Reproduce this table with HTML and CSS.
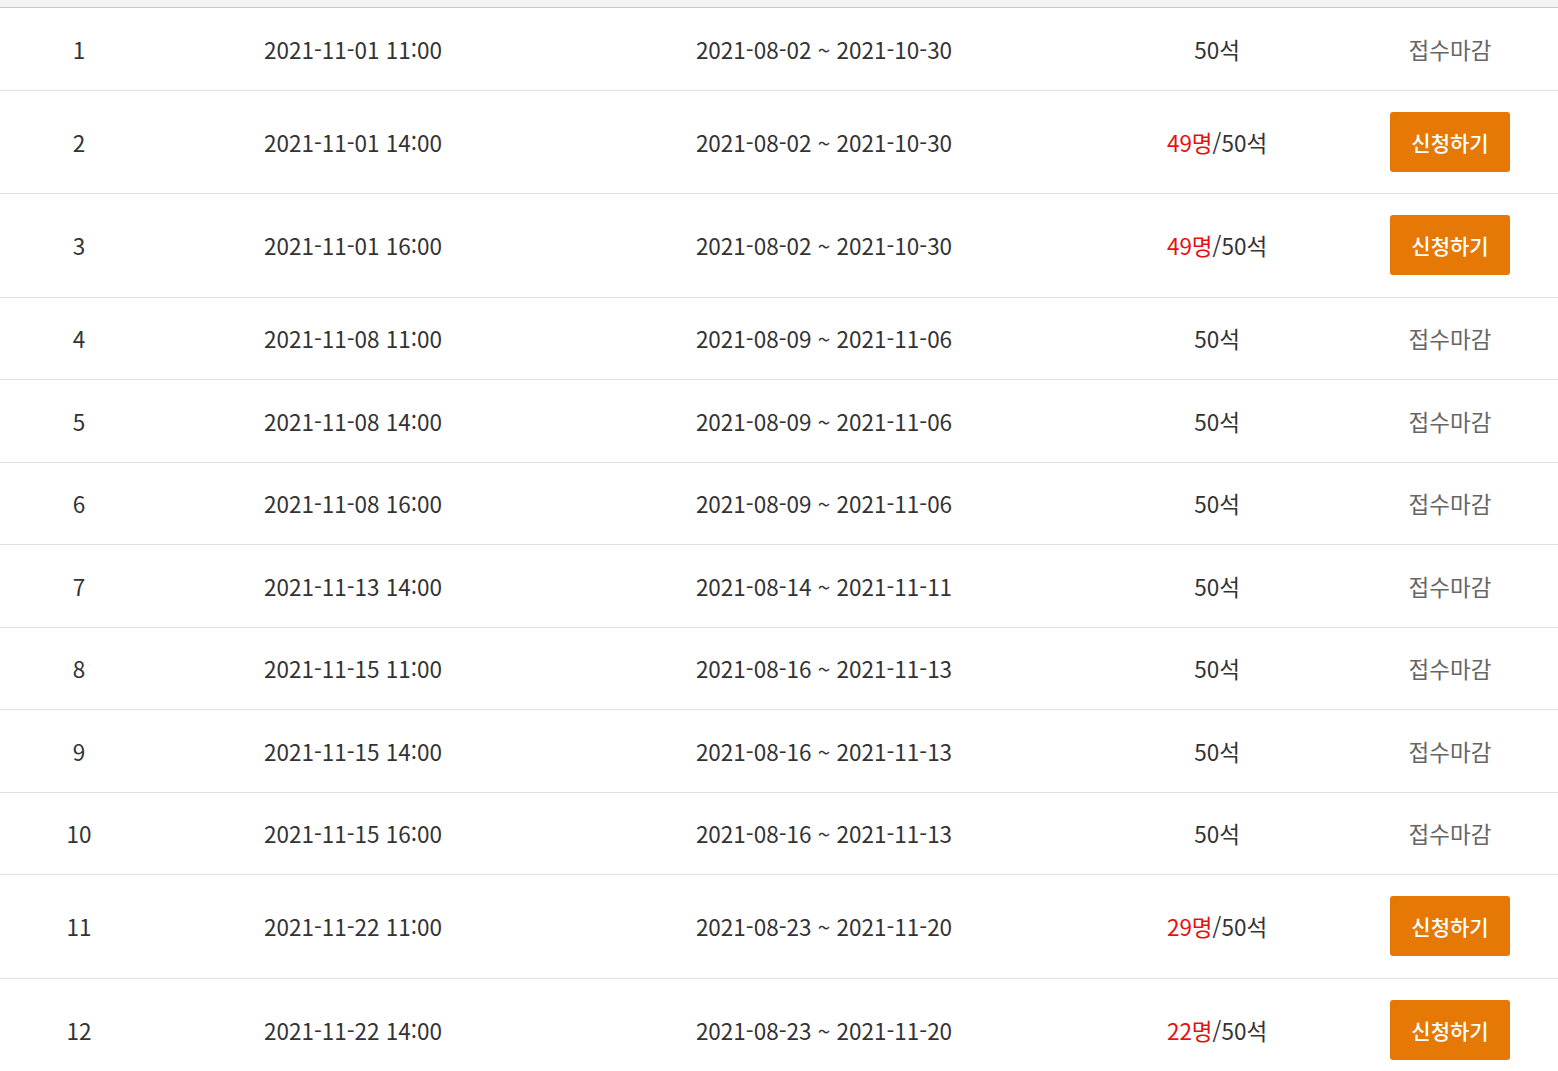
FILE: index.html
```html
<!DOCTYPE html>
<html lang="ko">
<head>
<meta charset="utf-8">
<link rel="stylesheet" href="styles.css">
</head>
<body>
<div class="topbar"></div>
<div class="table">
  <div class="row"><div class="c c1">1</div><div class="c c2">2021-11-01 11:00</div><div class="c c3">2021-08-02 ~ 2021-10-30</div><div class="c c4">50석</div><div class="c c5"><span class="closed">접수마감</span></div></div>
  <div class="row tall"><div class="c c1">2</div><div class="c c2">2021-11-01 14:00</div><div class="c c3">2021-08-02 ~ 2021-10-30</div><div class="c c4"><span class="red">49명</span>/50석</div><div class="c c5"><a class="btn">신청하기</a></div></div>
  <div class="row tall"><div class="c c1">3</div><div class="c c2">2021-11-01 16:00</div><div class="c c3">2021-08-02 ~ 2021-10-30</div><div class="c c4"><span class="red">49명</span>/50석</div><div class="c c5"><a class="btn">신청하기</a></div></div>
  <div class="row"><div class="c c1">4</div><div class="c c2">2021-11-08 11:00</div><div class="c c3">2021-08-09 ~ 2021-11-06</div><div class="c c4">50석</div><div class="c c5"><span class="closed">접수마감</span></div></div>
  <div class="row"><div class="c c1">5</div><div class="c c2">2021-11-08 14:00</div><div class="c c3">2021-08-09 ~ 2021-11-06</div><div class="c c4">50석</div><div class="c c5"><span class="closed">접수마감</span></div></div>
  <div class="row"><div class="c c1">6</div><div class="c c2">2021-11-08 16:00</div><div class="c c3">2021-08-09 ~ 2021-11-06</div><div class="c c4">50석</div><div class="c c5"><span class="closed">접수마감</span></div></div>
  <div class="row"><div class="c c1">7</div><div class="c c2">2021-11-13 14:00</div><div class="c c3">2021-08-14 ~ 2021-11-11</div><div class="c c4">50석</div><div class="c c5"><span class="closed">접수마감</span></div></div>
  <div class="row"><div class="c c1">8</div><div class="c c2">2021-11-15 11:00</div><div class="c c3">2021-08-16 ~ 2021-11-13</div><div class="c c4">50석</div><div class="c c5"><span class="closed">접수마감</span></div></div>
  <div class="row"><div class="c c1">9</div><div class="c c2">2021-11-15 14:00</div><div class="c c3">2021-08-16 ~ 2021-11-13</div><div class="c c4">50석</div><div class="c c5"><span class="closed">접수마감</span></div></div>
  <div class="row"><div class="c c1">10</div><div class="c c2">2021-11-15 16:00</div><div class="c c3">2021-08-16 ~ 2021-11-13</div><div class="c c4">50석</div><div class="c c5"><span class="closed">접수마감</span></div></div>
  <div class="row tall"><div class="c c1">11</div><div class="c c2">2021-11-22 11:00</div><div class="c c3">2021-08-23 ~ 2021-11-20</div><div class="c c4"><span class="red">29명</span>/50석</div><div class="c c5"><a class="btn">신청하기</a></div></div>
  <div class="row tall"><div class="c c1">12</div><div class="c c2">2021-11-22 14:00</div><div class="c c3">2021-08-23 ~ 2021-11-20</div><div class="c c4"><span class="red">22명</span>/50석</div><div class="c c5"><a class="btn">신청하기</a></div></div>
</div>
</body>
</html>
```
FILE: styles.css
```css
html, body {
  margin: 0;
  padding: 0;
  background: #fff;
}
body {
  font-family: "Noto Sans CJK KR", "Noto Sans", sans-serif;
  color: #333;
  font-size: 22.5px;
  overflow: hidden;
}
.topbar {
  height: 7px;
  background: #f4f4f4;
  border-bottom: 1px solid #c9c9c9;
}
.table {
  display: flex;
  flex-direction: column;
}
.row {
  display: grid;
  grid-template-columns: 158px 390px 552px 234px 224px;
  height: 82.5px;
  box-sizing: border-box;
  border-bottom: 1px solid #e2e2e2;
}
.row.tall {
  height: 103.5px;
}
.c {
  display: flex;
  align-items: center;
  justify-content: center;
  white-space: nowrap;
}
.c5 {
  padding-left: 8px;
}
.red {
  color: #e8110f;
}
.closed {
  color: #666;
}
.btn {
  display: flex;
  align-items: center;
  justify-content: center;
  width: 120px;
  height: 60px;
  background: #e67805;
  color: #fff;
  border-radius: 3px;
  font-size: 21px;
  font-weight: 500;
}
```
